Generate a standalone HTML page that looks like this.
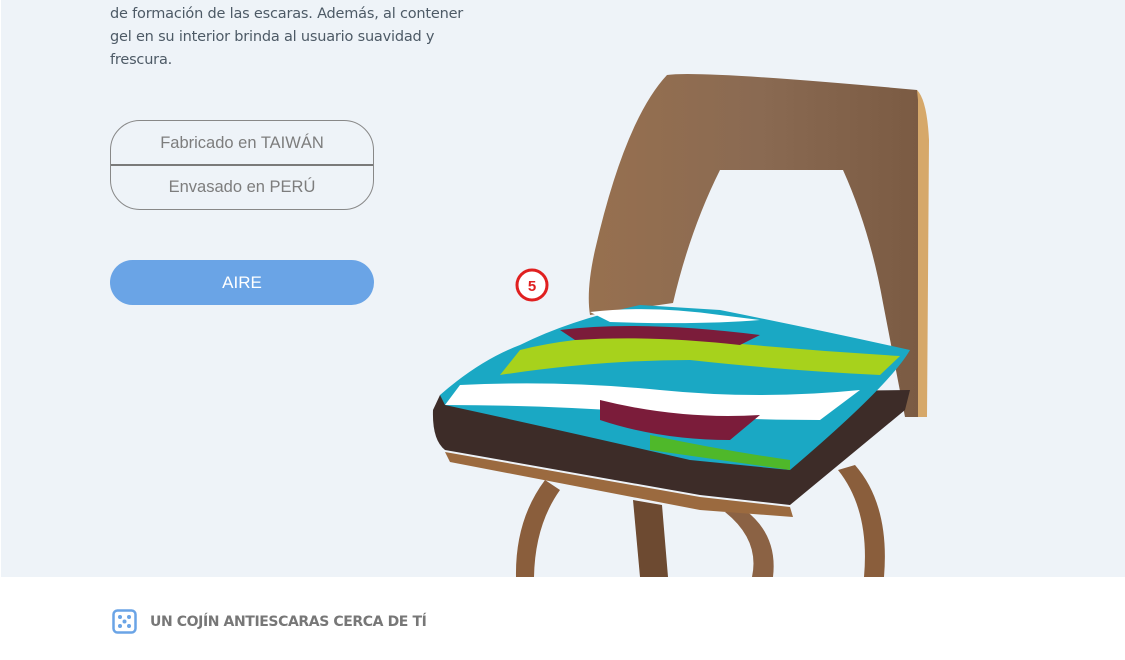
<!DOCTYPE html>
<html><head><meta charset="utf-8"><style>
body{margin:0;width:1125px;height:660px;overflow:hidden;background:#fff;font-family:"Liberation Sans",sans-serif;position:relative}
.top{position:absolute;left:1px;top:0;width:1124px;height:577px;background:#eef3f8}
.p{position:absolute;left:110px;top:3px;width:370px;font-family:"DejaVu Sans",sans-serif;font-size:14.5px;line-height:23px;color:#4d5a66;letter-spacing:-0.2px}
.box{position:absolute;left:110px;top:120px;width:262px;height:88px;border:1px solid #888;border-radius:30px;color:#7d7d7d;font-size:16.5px}
.box div{height:44px;line-height:44px;text-align:center}
.box .l{position:absolute;left:0;right:0;top:43px;border-top:2px solid #7a7a7a}
.btn{position:absolute;left:110px;top:260px;width:264px;height:45px;border-radius:23px;background:#6aa4e6;color:#fff;font-size:17px;line-height:45px;text-align:center}
.h{position:absolute;left:150px;top:614px;font-family:"DejaVu Sans",sans-serif;font-weight:bold;font-size:14px;color:#777;letter-spacing:-0.4px}
</style></head><body>
<div class="top"></div>
<div class="p">de formación de las escaras. Además, al contener gel en su interior brinda al usuario suavidad y frescura.</div>
<div class="box"><div>Fabricado en TAIWÁN</div><div class="l"></div><div>Envasado en PERÚ</div></div>
<div class="btn">AIRE</div>
<svg style="position:absolute;left:0;top:0" width="1125" height="577">
<defs><linearGradient id="w" x1="0" x2="1"><stop offset="0" stop-color="#97704f"/><stop offset=".5" stop-color="#8a6a52"/><stop offset="1" stop-color="#7a5a42"/></linearGradient></defs>
<path d="M545 480 Q515 520 516 577 L534 577 Q535 525 560 490Z" fill="#8a5e3c"/>
<path d="M633 500 L640 577 L668 577 L662 505Z" fill="#6d4a31"/>
<path d="M725 512 Q760 540 752 577 L773 577 Q778 535 745 510Z" fill="#8b6244"/>
<path d="M838 470 Q870 510 864 577 L884 577 Q890 505 855 465Z" fill="#8a5e3c"/>
<path d="M667 75 Q700 70 917 90 Q925 100 928 140 L925 417 L905 417 L883 303 Q870 230 843 170 L720 170 Q690 230 673 303 L590 315 Q586 290 595 250 Q625 120 667 75Z" fill="url(#w)"/>
<path d="M917 90 Q927 100 929 140 L927 417 L918 417 L918 100Z" fill="#d6a86a"/>
<path d="M440 395 L910 390 L905 410 L790 505 L700 495 L445 450 Q432 440 433 410Z" fill="#3d2c28"/>
<path d="M445 452 L700 497 L790 507 L793 517 L700 510 L450 462Z" fill="#9b6a3f"/>
<path d="M440 395 Q480 360 520 345 Q570 320 640 305 L720 310 Q820 330 910 350 Q890 385 790 470 L690 460 Q560 430 445 405Z" fill="#1aa8c4"/>
<path d="M520 350 Q600 330 700 340 Q800 350 900 356 L880 375 Q780 370 690 360 Q600 360 500 375Z" fill="#a7d21c"/>
<path d="M460 385 Q560 380 660 390 Q760 400 860 390 L820 420 Q720 420 640 412 Q540 405 445 405Z" fill="#fff"/>
<path d="M560 330 Q640 320 760 335 L740 345 Q650 335 575 340Z" fill="#7b1c3a"/>
<path d="M600 400 Q680 420 760 415 L730 440 Q660 440 600 420Z" fill="#7b1c3a"/>
<path d="M650 435 Q720 450 790 460 L790 470 L650 450Z" fill="#4fb82a"/>
<path d="M590 312 Q650 305 720 315 L760 320 Q700 325 610 322Z" fill="#fff"/>
<circle cx="532" cy="285" r="15" fill="#fff" stroke="#e02020" stroke-width="3"/>
<text x="532" y="291" text-anchor="middle" font-family="Liberation Sans" font-weight="bold" font-size="15" fill="#e02020">5</text>
</svg>
<svg style="position:absolute;left:112px;top:609px" width="26" height="26"><rect x="1.5" y="1.5" width="22" height="22" rx="4" fill="none" stroke="#6aa4e6" stroke-width="2.5"/><g fill="#6aa4e6"><circle cx="8" cy="8" r="2"/><circle cx="17" cy="8" r="2"/><circle cx="12.5" cy="12.5" r="2"/><circle cx="8" cy="17" r="2"/><circle cx="17" cy="17" r="2"/></g></svg>
<div class="h">UN COJÍN ANTIESCARAS CERCA DE TÍ</div>
</body></html>
